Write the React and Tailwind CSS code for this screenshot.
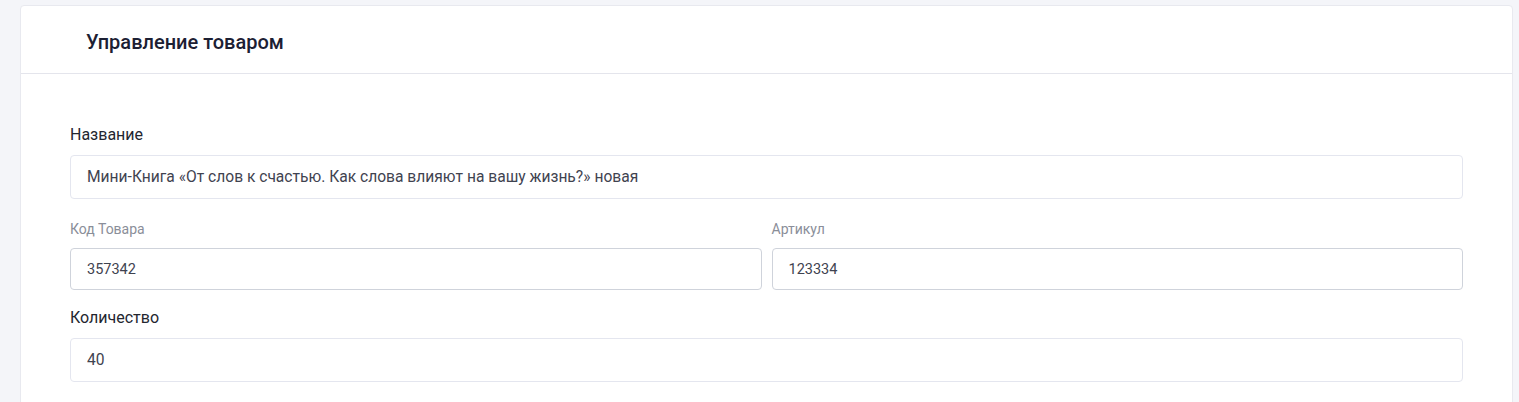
import { useState } from "react";

function Field({ label, value, onChange, small }) {
  return (
    <label className="block">
      <span
        className={
          small
            ? "block text-[14px] leading-[18px] text-[#8a8e99] mb-[10px]"
            : "block text-[16px] leading-[22px] text-[#23262f] mb-[9px]"
        }
      >
        {label}
      </span>
      <input
        type="text"
        value={value}
        onChange={(e) => onChange(e.target.value)}
        className={
          small
            ? "w-full h-[42px] pl-4 pr-3 bg-white text-[14.5px] text-[#3f4350] border border-[#cfd3db] rounded-[4px] outline-none"
            : "w-full h-[44px] pl-4 pr-3 bg-white text-[15.6px] text-[#3f4350] border border-[#e4e6ef] rounded-[4px] outline-none"
        }
      />
    </label>
  );
}

export default function App() {
  const [name, setName] = useState(
    "Мини-Книга «От слов к счастью. Как слова влияют на вашу жизнь?» новая"
  );
  const [code, setCode] = useState("357342");
  const [sku, setSku] = useState("123334");
  const [qty, setQty] = useState("40");

  return (
    <div className="min-h-[402px] bg-[#f4f5f9] pt-[5px] pl-[20px] pr-[6px] font-['Roboto',sans-serif]">
      <div className="bg-white border border-[#e8e9ef] rounded-[4px] min-h-[420px]">
        {/* header */}
        <div className="h-[68px] flex items-center pt-[5px] pl-[65px] border-b border-[#e4e5ec]">
          <h3 className="text-[20px] font-medium text-[#1c2033]">
            Управление товаром
          </h3>
        </div>

        <form className="px-[49px] pt-[50px]" onSubmit={(e) => e.preventDefault()}>
          <Field label="Название" value={name} onChange={setName} />

          <div className="grid grid-cols-2 gap-[10px] mt-[21px]">
            <Field label="Код Товара" value={code} onChange={setCode} small />
            <Field label="Артикул" value={sku} onChange={setSku} small />
          </div>

          <div className="mt-[17px]">
            <Field label="Количество" value={qty} onChange={setQty} />
          </div>
        </form>
      </div>
    </div>
  );
}
